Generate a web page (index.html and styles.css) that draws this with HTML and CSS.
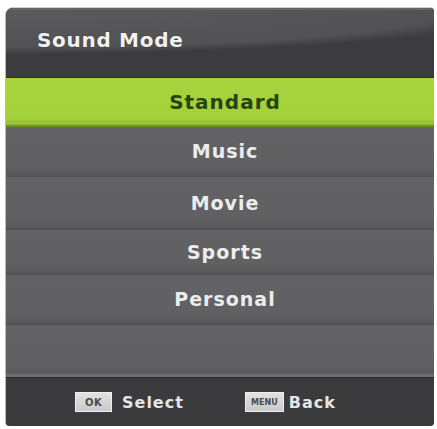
FILE: index.html
```html
<!DOCTYPE html>
<html>
<head>
<meta charset="utf-8">
<link rel="stylesheet" href="styles.css">
</head>
<body>
<div class="panel">
  <div class="header"><span class="title">Sound Mode</span></div>
  <div class="row selected r1">Standard</div>
  <div class="row r2">Music</div>
  <div class="row r3">Movie</div>
  <div class="row r4">Sports</div>
  <div class="row r5">Personal</div>
  <div class="row r6"></div>
  <div class="footer">
    <div class="hint hint-ok"><span class="key key-ok">OK</span><span class="label">Select</span></div>
    <div class="hint hint-menu"><span class="key key-menu">MENU</span><span class="label">Back</span></div>
  </div>
</div>
</body>
</html>
```
FILE: styles.css
```css
html, body {
  margin: 0;
  padding: 0;
  background: #ffffff;
}
body {
  width: 437px;
  height: 429px;
  overflow: hidden;
  font-family: "DejaVu Sans", "Liberation Sans", sans-serif;
}
.panel {
  margin: 8px 0 0 6px;
  width: 428px;
  height: 418px;
  display: flex;
  flex-direction: column;
  border-radius: 7px 4px 4px 4px;
  overflow: hidden;
  background: #5f5f61;
  box-shadow: -1px 0 0 #b9b9b9, 0 -1px 0 #cfcfcf;
}
.header {
  height: 70px;
  flex: none;
  display: flex;
  align-items: center;
  padding: 0 0 0 31px;
  box-sizing: border-box;
  background:
    radial-gradient(ellipse 520px 44px at 0 0, #5a5a5c 0%, #525254 85%, #3c3c3e 100%),
    #3a3a3c;
  background-repeat: no-repeat;
  border-top: 2px solid #656567;
  border-bottom: 1px solid #303032;
}
.title {
  color: #f2f2f2;
  font-weight: bold;
  font-size: 20px;
  letter-spacing: 0.7px;
  margin-top: -8px;
  text-shadow: 0 0 1px rgba(0,0,0,0.6);
}
.row {
  flex: none;
  display: flex;
  align-items: center;
  justify-content: center;
  padding-left: 10px;
  box-sizing: border-box;
  font-weight: bold;
  font-size: 19px;
  letter-spacing: 1px;
  color: #ececec;
  background: linear-gradient(to bottom, #636365 0%, #606062 80%, #59595b 100%);
  border-bottom: 2px solid #525254;
}
.selected {
  background: linear-gradient(to bottom, #a7d43c 0%, #a4d13a 85%, #93bd33 100%);
  color: #274312;
  font-size: 20px;
  border-bottom: 2px solid #6f8f2c;
}
.r1 { height: 49px; }
.r2 { height: 50px; }
.r3 { height: 53px; }
.r4 { height: 45px; }
.r5 { height: 50px; }
.r6 { height: 52px; border-bottom: 3px solid #6d6d6f; }
.footer {
  flex: 1;
  display: flex;
  align-items: center;
  padding: 0 0 0 69px;
  background: #3b3b3d;
  border-top: 1px solid #2e2e30;
}
.hint {
  display: flex;
  align-items: center;
}
.hint-ok { gap: 10px; }
.hint-menu { gap: 5px; margin-left: 61px; }
.key {
  display: flex;
  align-items: center;
  justify-content: center;
  height: 20px;
  box-sizing: border-box;
  background: linear-gradient(to bottom, #e2e2e2, #c9c9c9);
  border: 1px solid #f0f0f0;
  color: #4a4a4a;
  font-weight: bold;
  font-size: 10px;
  letter-spacing: 0.5px;
}
.key-ok { width: 37px; }
.key-menu { width: 39px; font-size: 8px; letter-spacing: 0; }
.label {
  color: #e6e6e6;
  font-weight: bold;
  font-size: 16px;
  letter-spacing: 1px;
}
```
